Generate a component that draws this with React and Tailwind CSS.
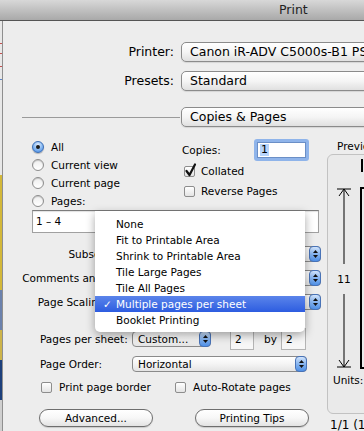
import React from "react";

function Stepper() {
  return (
    <div className="-my-[1px] -mr-[1px] flex w-[12px] shrink-0 flex-col items-center justify-center gap-[2px] rounded-[4px] border border-[#4873b8] bg-gradient-to-b from-[#d2e4fb] via-[#86b4ef] to-[#4f90e6]">
      <svg width="5" height="3" viewBox="0 0 5 3"><path d="M2.5 0 L5 3 L0 3 Z" fill="#111" /></svg>
      <svg width="5" height="3" viewBox="0 0 5 3"><path d="M0 0 L5 0 L2.5 3 Z" fill="#111" /></svg>
    </div>
  );
}

function SmallPopup({ text, className = "" }) {
  return (
    <div className={"flex h-[16px] shrink-0 items-stretch rounded-[4px] border border-[#8a8a8a] bg-gradient-to-b from-white via-[#f4f4f4] to-[#e4e4e4] " + className}>
      <span className="flex flex-1 items-center overflow-hidden whitespace-nowrap pl-[5px] text-[10.5px] leading-none">{text}</span>
      <Stepper />
    </div>
  );
}

function BigPopup({ text }) {
  return (
    <div className="flex h-[20px] w-[220px] shrink-0 items-center whitespace-nowrap rounded-[5px] border border-[#8b8b8b] bg-gradient-to-b from-white via-[#f5f5f5] to-[#e0e0e0] pl-[8px] text-[12.5px] leading-none shadow-[0_1px_1px_rgba(0,0,0,0.1)]">
      {text}
    </div>
  );
}

function Radio({ checked }) {
  return checked ? (
    <span className="flex h-[12px] w-[12px] shrink-0 items-center justify-center rounded-full border border-[#3a6db5] bg-[radial-gradient(circle_at_50%_30%,#e6f0ff_0%,#92bff3_45%,#3f86e3_100%)] shadow-[0_1px_1px_rgba(0,0,0,0.25)]">
      <span className="h-[4px] w-[4px] rounded-full bg-[#1b1b1b]" />
    </span>
  ) : (
    <span className="h-[12px] w-[12px] shrink-0 rounded-full border border-[#8d8d8d] bg-gradient-to-b from-[#eeeeee] to-white shadow-[inset_0_1px_1px_rgba(0,0,0,0.18)]" />
  );
}

function Check({ checked }) {
  return (
    <span className="relative h-[11px] w-[11px] shrink-0 rounded-[2px] border border-[#8d8d8d] bg-gradient-to-b from-white to-[#e4e4e4]">
      {checked && (
        <svg className="absolute left-[-1px] top-[-4px]" width="13" height="14" viewBox="0 0 13 14">
          <path d="M2.5 8 L5.5 12 L11 1.5" fill="none" stroke="#111" strokeWidth="2.2" strokeLinecap="round" strokeLinejoin="round" />
        </svg>
      )}
    </span>
  );
}

function Pill({ text }) {
  return (
    <div className="flex h-[18px] w-[114px] items-center justify-center rounded-full border border-[#6e6e6e] bg-gradient-to-b from-white via-[#f7f7f7] to-[#e3e3e3] text-[10.5px] leading-none shadow-[0_1px_1px_rgba(0,0,0,0.15)]">
      {text}
    </div>
  );
}

const menuItems = [
  "None",
  "Fit to Printable Area",
  "Shrink to Printable Area",
  "Tile Large Pages",
  "Tile All Pages",
  "Multiple pages per sheet",
  "Booklet Printing",
];

export default function App() {
  return (
    <div className="relative flex h-[431px] w-[364px] flex-col overflow-hidden bg-[#ededed] font-['DejaVu_Sans',sans-serif] text-black">
      {/* Title bar */}
      <div className="h-[21px] shrink-0 border-b border-[#555] bg-gradient-to-b from-[#d8d8d8] to-[#a9a9a9] pl-[279px] text-[12.5px] leading-[20px] text-[#222]">
        Print
      </div>

      <div className="flex min-h-0 flex-1">
        {/* desktop strip */}
        <div className="flex w-[2px] shrink-0 flex-col">
          <div className="h-[22px] bg-[#e8e8e8]" />
          <div className="h-[1px] bg-[#c45050]" />
          <div className="h-[9px] bg-[#e8e8e8]" />
          <div className="h-[1px] bg-[#c45050]" />
          <div className="h-[12px] bg-[#e8e8e8]" />
          <div className="h-[1px] bg-[#c45050]" />
          <div className="h-[12px] bg-[#e8e8e8]" />
          <div className="h-[1px] bg-[#5b84c8]" />
          <div className="h-[95px] bg-[#e8e8e8]" />
          <div className="h-[115px] bg-[#d3b83a]" />
          <div className="h-[40px] bg-[#6c82ad]" />
          <div className="h-[30px] bg-[#cdb44a]" />
          <div className="h-[40px] bg-[#1d407c]" />
          <div className="flex-1 bg-[#cfcfcf]" />
        </div>

        {/* window body */}
        <div className="flex min-w-0 flex-1 flex-col border-l border-[#8f8f8f]">
          <div className="mt-[21px] flex h-[20px] items-center">
            <span className="w-[171px] shrink-0 text-right text-[12.5px] leading-none">Printer:</span>
            <div className="ml-[7px]"><BigPopup text="Canon iR-ADV C5000s-B1 PS" /></div>
          </div>
          <div className="mt-[9px] flex h-[20px] items-center">
            <span className="w-[171px] shrink-0 text-right text-[12.5px] leading-none">Presets:</span>
            <div className="ml-[7px]"><BigPopup text="Standard" /></div>
          </div>
          <div className="mt-[16px] flex h-[21px] items-center pl-[19px]">
            <div className="h-px w-[158px] shrink-0 bg-[#9a9a9a]" />
            <div className="ml-[1px]"><BigPopup text="Copies & Pages" /></div>
          </div>

          {/* main */}
          <div className="flex">
            <div className="flex w-[318px] shrink-0 flex-col pt-[11px] text-[10.5px] leading-none">
              <div className="flex">
                <div className="flex w-[179px] shrink-0 flex-col pl-[29px]">
                  {[
                    ["All", true],
                    ["Current view", false],
                    ["Current page", false],
                    ["Pages:", false],
                  ].map(([t, c]) => (
                    <div key={t} className="flex h-[18px] items-center gap-[7px]">
                      <Radio checked={c} />
                      <span>{t}</span>
                    </div>
                  ))}
                </div>
                <div className="flex flex-col">
                  <div className="mt-[1px] flex h-[22px] items-center">
                    <span className="w-[72px] shrink-0">Copies:</span>
                    <div className="h-[22px] w-[55px] rounded-[3px] bg-[#8fb4ea] p-[3px]">
                      <div className="flex h-full items-center border border-[#6b8fc6] bg-white pl-[2px]">
                        <span className="bg-[#b7d4fb] px-[1px] text-[11px] leading-[12px]">1</span>
                      </div>
                    </div>
                  </div>
                  <div className="flex h-[20px] items-center gap-[6px] pl-[2px]">
                    <Check checked />
                    <span>Collated</span>
                  </div>
                  <div className="flex h-[20px] items-center gap-[6px] pl-[2px]">
                    <Check />
                    <span>Reverse Pages</span>
                  </div>
                </div>
              </div>

              <div className="pl-[29px]">
                <div className="flex h-[23px] w-[287px] items-center border border-[#a0a0a0] border-t-[#7c7c7c] bg-white pl-[3px] shadow-[inset_0_1px_1px_rgba(0,0,0,0.12)]">
                  1 – 4
                </div>
              </div>

              <div className="mt-[9px] flex h-[24px] items-center">
                <span className="w-[105px] shrink-0 text-right">Subset:</span>
                <SmallPopup className="ml-[5px] flex-1" text="" />
              </div>
              <div className="flex h-[24px] items-center">
                <span className="w-[138px] shrink-0 text-right">Comments and Forms:</span>
                <SmallPopup className="ml-[5px] flex-1" text="" />
              </div>
              <div className="flex h-[24px] items-center">
                <span className="w-[105px] shrink-0 text-right">Page Scaling:</span>
                <SmallPopup className="ml-[5px] flex-1" text="" />
              </div>

              <div className="mt-[12px] flex h-[26px] items-center pl-[37px]">
                <span className="w-[92px] shrink-0">Pages per sheet:</span>
                <SmallPopup className="w-[79px]" text="Custom..." />
                <div className="ml-[19px] flex h-[22px] w-[24px] items-center border border-[#b4b4b4] bg-[#f7f7f7] pl-[4px]">2</div>
                <span className="box-content w-[17px] shrink-0 pl-[10px]">by</span>
                <div className="flex h-[22px] w-[25px] items-center border border-[#b4b4b4] bg-[#f7f7f7] pl-[4px]">2</div>
              </div>
              <div className="flex h-[24px] items-center pl-[37px]">
                <span className="w-[92px] shrink-0">Page Order:</span>
                <SmallPopup className="w-[175px]" text="Horizontal" />
              </div>
              <div className="flex h-[23px] items-center pl-[38px]">
                <div className="flex w-[134px] shrink-0 items-center gap-[7px]">
                  <Check />
                  <span>Print page border</span>
                </div>
                <div className="flex items-center gap-[7px]">
                  <Check />
                  <span>Auto-Rotate pages</span>
                </div>
              </div>
              <div className="mt-[10px] flex items-center gap-[42px] pl-[36px]">
                <Pill text="Advanced..." />
                <Pill text="Printing Tips" />
              </div>
            </div>

            {/* preview column */}
            <div className="flex flex-col pt-[12px]">
              <span className="pl-[16px] text-[10.5px] leading-[14px]">Preview</span>
              <div className="ml-[6px] mt-[1px] h-[260px] w-[60px] rounded-l-[6px] border border-[#c2c2c2] bg-[#eaeaea]">
                <svg width="58" height="258" viewBox="0 0 58 258" className="block">
                  <rect x="33" y="4" width="2" height="13" fill="#000" />
                  <rect x="33" y="33" width="30" height="180" fill="none" stroke="#000" strokeWidth="2" />
                  <path d="M9 34 H23 M16 34 L11 41 M16 34 L21 41 M16 34 V109 M16 139 V212 M11 205 L16 212 L21 205 M9 212 H23" fill="none" stroke="#000" strokeWidth="1" />
                  <text x="16" y="128" textAnchor="middle" fontSize="10.5" fontFamily="DejaVu Sans, sans-serif" fill="#000">11</text>
                  <text x="5" y="229" fontSize="10.5" fontFamily="DejaVu Sans, sans-serif" fill="#000">Units:</text>
                </svg>
              </div>
              <span className="mt-[4px] whitespace-nowrap pl-[9px] text-[12px] leading-[14px]">1/1 (1)</span>
            </div>
          </div>
        </div>
      </div>

      {/* popup menu overlay */}
      <div className="absolute left-[95px] top-[211px] h-[121px] w-[210px] rounded-b-[5px] bg-white pt-[5px] shadow-[0_3px_10px_rgba(0,0,0,0.35)]">
        {menuItems.map((t) => {
          const sel = t === "Multiple pages per sheet";
          return (
            <div
              key={t}
              className={
                "flex h-[16px] items-center text-[10.5px] leading-none " +
                (sel ? "bg-gradient-to-b from-[#5b84ea] to-[#2d5ce0] text-white" : "text-black")
              }
            >
              <span className="w-[21px] shrink-0 pl-[8px]">{sel ? "✓" : ""}</span>
              <span>{t}</span>
            </div>
          );
        })}
      </div>
    </div>
  );
}
